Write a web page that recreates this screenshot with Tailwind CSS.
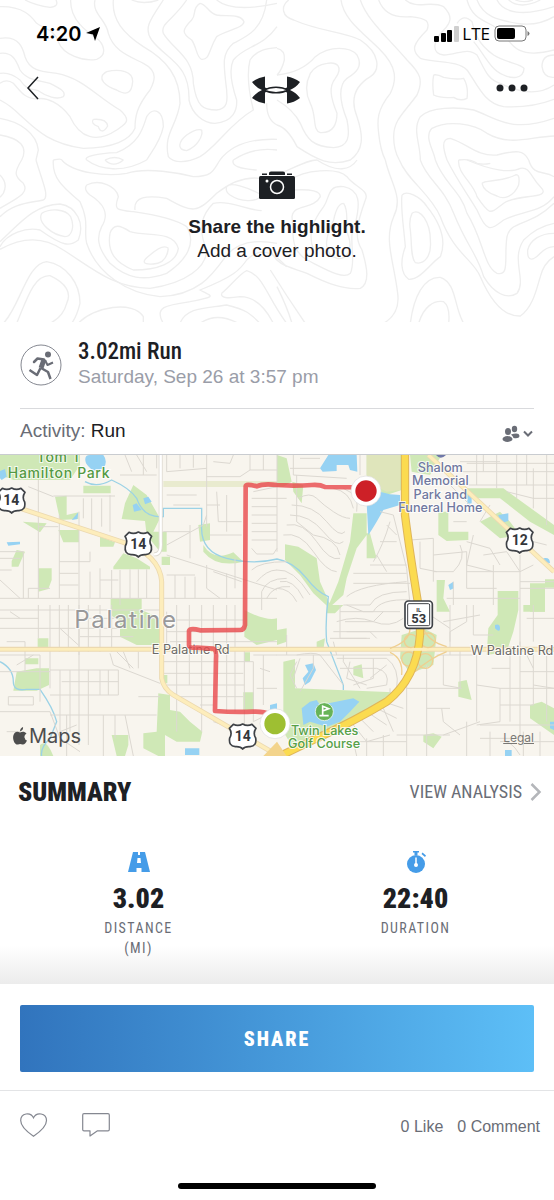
<!DOCTYPE html>
<html lang="en">
<head>
    <meta charset="UTF-8">
    <meta name="viewport" content="width=device-width, initial-scale=1.0">
    <title>3.02mi Run</title>
    <script src="https://cdn.jsdelivr.net/npm/@tailwindcss/browser@4"></script>
</head>
<body class="bg-white min-h-screen flex flex-col font-['Liberation_Sans',sans-serif] text-[#1d2024]">
    <!-- Cover -->
    <header class="relative h-[322px] overflow-hidden">
        <svg class="absolute inset-0 w-full h-full" viewBox="0 0 1662 966" preserveAspectRatio="xMidYMin slice" fill="none" stroke="#eeeeee" stroke-width="4" aria-hidden="true">
            <g>
                <path d="M75 0Q110 18 150 22Q178 20 168 0M0 20C70 18 95 50 110 70C130 85 165 90 175 125C190 165 250 185 290 178C325 165 310 130 290 115C260 95 210 60 212 0"/>
                <path d="M285 0C275 40 320 60 325 100C340 150 380 165 430 190C480 215 460 250 450 270C410 320 405 350 405 385C390 420 340 445 250 445C140 430 100 380 60 345C40 325 20 310 0 300"/>
                <path d="M340 0C335 60 370 100 430 140C500 180 540 230 540 310C530 380 490 400 505 470C520 490 560 490 600 470C650 440 690 370 760 330C740 250 745 200 750 180C770 150 800 145 831 143M395 0Q430 15 475 0"/>
                <path d="M490 0C450 60 430 85 455 120C500 180 570 190 567 300C575 340 610 370 645 370C700 365 712 330 710 300C690 240 690 200 700 180C730 140 790 140 831 80"/>
                <path d="M560 0C520 60 480 70 490 100C520 150 580 170 580 250C590 320 610 330 650 330C690 325 680 290 680 270C670 190 665 160 700 130C740 110 790 90 800 0"/>
                <path d="M600 10C575 25 590 45 575 60C545 90 545 100 575 120C590 140 590 175 605 178C630 180 625 150 650 110C680 90 730 85 732 65C720 40 680 50 650 45C625 40 620 12 600 10M650 0C680 25 740 30 831 10"/>
                <path d="M320 215C360 205 400 215 398 245C395 285 375 285 350 270C320 260 285 235 320 215"/>
                <path d="M0 115C60 105 70 150 75 170C90 215 130 215 170 220C250 235 290 290 360 330C400 365 370 375 350 390C290 430 240 415 210 350C180 310 140 290 110 297C70 295 60 270 40 250Q20 235 0 250"/>
                <path d="M0 160C40 155 50 185 60 210C80 240 110 240 150 250C180 265 200 275 190 290C170 300 140 290 115 272C90 265 80 270 60 240Q30 215 0 220"/>
                <path d="M280 358Q320 355 323 378C310 400 300 395 295 380Q270 370 280 358M605 390C610 410 590 440 560 452C530 450 535 425 560 405Q590 385 605 390"/>
                <path d="M0 355C60 365 110 400 115 450L108 480M0 405C60 415 85 440 65 480M260 480C250 470 290 460 350 458C420 430 430 380 440 350C460 320 490 330 490 380C480 430 450 460 440 480M315 480Q345 465 370 480"/>
                <path d="M660 480C690 440 740 415 831 418M700 480Q760 440 831 450M800 310Q800 360 831 375M160 480Q185 475 185 480"/>
            </g>
            <g transform="translate(831 0)">
                <path d="M35 0C10 20 15 50 50 60C130 95 200 95 250 120C310 160 310 210 280 230C230 260 220 300 240 350C260 410 260 450 220 480C160 500 120 480 60 440C40 400 20 380 0 375"/>
                <path d="M0 225C50 220 90 200 115 170C160 135 220 140 240 165C260 200 235 220 210 235C180 260 190 310 210 360C220 410 215 440 170 443C110 440 90 420 70 370Q50 330 0 300"/>
                <path d="M100 220C85 250 85 280 100 310C120 350 105 390 130 398C170 400 180 370 180 340C160 290 155 260 175 235C200 200 180 185 150 190Q115 195 100 220M0 145Q25 150 22 180Q15 210 0 225"/>
                <path d="M192 0C200 60 260 100 310 150C360 200 360 240 340 280C300 330 300 360 305 400Q310 450 325 480M250 0C270 60 330 110 390 180C430 220 440 240 420 285C380 340 350 360 350 410Q350 450 367 480"/>
                <path d="M305 0C320 40 350 55 400 50C450 55 460 65 450 90C410 130 400 150 430 175C480 190 540 180 570 210C600 250 620 310 680 320Q760 325 831 298"/>
                <path d="M385 0C420 30 460 0 500 20C530 50 520 70 500 90C470 120 460 160 500 165C540 165 570 140 600 165C620 200 630 240 670 250C720 275 780 290 831 255"/>
                <path d="M540 70Q560 40 585 65C590 90 600 130 650 165C690 190 730 190 741 205C740 240 700 235 680 225C640 210 620 160 590 125M600 0C620 50 660 60 720 70Q780 80 831 50M570 0C590 70 640 60 680 100C700 130 720 180 831 150M660 0C680 40 740 50 831 20M695 0Q730 30 790 0M715 0Q740 10 768 0"/>
                <path d="M470 225Q480 222 500 232Q540 240 560 235Q575 260 570 295Q550 305 530 292Q490 295 470 285Q465 250 470 225M831 165Q795 165 795 200Q800 235 831 232"/>
                <path d="M430 480C430 430 405 390 430 350C460 320 540 320 590 330C660 355 700 400 831 355M475 480C470 450 440 410 465 385C510 360 590 370 630 400C700 440 760 410 831 408M510 480C500 450 490 415 520 415C570 430 600 470 660 465C720 450 740 450 755 480M545 480Q580 475 600 490Q620 495 640 490"/>
            </g>
            <g transform="translate(0 480)">
                <path d="M108 0C125 60 150 110 130 120C80 130 40 130 0 170M65 0C40 40 45 50 70 70C90 100 50 115 0 145M0 45Q25 70 10 100L0 112"/>
                <path d="M160 0C155 60 200 90 240 125C270 190 250 210 260 250C290 340 380 400 480 410C600 405 640 340 680 285Q730 230 831 250"/>
                <path d="M260 75C300 55 350 80 355 110C340 150 350 150 400 155C470 165 530 180 560 200C590 250 560 300 500 340C430 365 380 355 330 310C290 260 290 230 305 200C330 160 310 130 270 105Q250 90 260 75"/>
                <path d="M330 220C340 190 360 195 390 215C440 230 520 210 535 265C530 310 470 330 400 330C350 310 320 280 330 220M505 265Q500 310 460 312C420 315 430 300 450 285Q490 250 505 265"/>
                <path d="M0 245C60 190 100 135 180 132C230 140 255 190 235 240C210 260 190 260 120 210C80 200 20 220 0 260M125 160C150 145 195 145 212 170C225 200 215 230 195 230C160 225 110 190 125 160"/>
                <path d="M0 268C70 230 130 230 190 270C270 320 340 385 450 385C560 370 620 320 620 270C590 200 610 160 640 130C690 120 740 150 785 152"/>
                <path d="M185 0C220 40 320 50 380 40C440 20 540 40 580 50C640 50 640 30 660 0M260 0C300 30 370 40 440 0M315 0Q340 25 370 0M700 0Q690 25 770 30"/>
                <path d="M405 150C400 110 440 105 500 115C580 160 590 160 650 100C700 60 740 50 780 55M680 80C690 65 740 80 785 105C770 130 720 125 690 105Q675 95 680 80"/>
                <path d="M10 490C60 440 80 310 140 305C200 315 240 370 240 430Q230 470 215 490M50 490C80 420 100 345 150 347C200 370 215 400 200 430Q190 470 150 490M235 490C280 440 400 420 430 470L430 490"/>
                <path d="M490 490C460 440 500 435 570 425C650 410 640 410 600 390C700 350 720 330 740 300C790 250 831 290 860 320M540 490C560 440 620 445 680 435C740 450 750 460 780 490M665 400C690 380 720 340 740 332C790 345 800 410 860 490M665 400Q660 420 720 410C770 410 800 450 820 490M600 490Q650 455 715 490"/>
            </g>
            <g transform="translate(831 480)">
                <path d="M40 60C80 30 180 20 210 50C230 80 280 90 265 120C240 190 230 230 255 270C270 320 280 370 250 385C200 390 150 370 90 340C40 320 0 320 -20 270"/>
                <path d="M50 90Q130 85 130 110C110 150 50 130 45 170C50 230 40 270 90 300C150 330 200 360 220 340C240 300 210 230 235 190C250 130 250 90 200 80C150 75 160 110 140 140C110 180 90 220 110 270"/>
                <path d="M200 130C220 160 200 200 215 230C230 280 200 300 180 295C130 280 150 220 170 180Q180 130 200 130"/>
                <path d="M0 45C60 20 90 0 120 0C180 40 220 30 240 0M325 0C340 70 380 110 350 170C320 240 350 300 362 400Q370 460 320 490"/>
                <path d="M375 105C390 90 430 110 450 140C490 190 510 240 490 290C460 310 430 360 395 358C370 340 370 300 385 260C380 200 370 140 375 105M405 160C430 140 460 190 460 240C465 290 440 315 415 308C400 290 405 250 400 210Q395 180 405 160"/>
                <path d="M367 0C390 60 460 100 490 170C530 280 590 300 610 350C640 420 680 470 730 468C770 440 780 380 790 350Q800 310 831 290"/>
                <path d="M430 0C450 60 500 80 530 160C570 260 600 280 620 350C650 400 690 420 720 400C750 360 700 300 740 240Q780 200 831 190"/>
                <path d="M475 0C500 70 550 90 570 160C620 240 620 320 660 340C700 350 680 290 690 230C700 180 760 200 831 130M510 0C540 60 570 100 600 150C630 220 640 210 680 180C740 150 790 160 831 110"/>
                <path d="M545 0C540 40 590 70 600 110C640 170 640 160 680 130C720 100 830 120 790 80C760 50 760 20 730 25C700 40 640 30 570 0M615 70C620 60 680 65 715 45Q730 40 725 75C710 110 680 120 660 108Q620 95 615 70"/>
                <path d="M755 0C770 50 800 30 831 50M831 220C790 220 760 240 752 270C750 310 770 300 790 280Q810 260 831 260"/>
                <path d="M400 490C410 410 440 350 490 352C540 370 530 440 560 490M425 490C440 440 470 420 500 425Q520 440 515 490M-20 330Q30 410 85 490M0 380Q30 440 45 490"/>
            </g>
        </svg>

        <div class="relative">
            <!-- Status bar -->
            <div class="h-16 pt-1 pl-9 pr-6 flex items-center justify-between text-black font-['Inter',sans-serif]">
                <div class="flex items-center gap-1">
                    <span class="text-xl font-semibold">4:20</span>
                    <svg class="w-4 h-4" viewBox="0 0 16 16" aria-hidden="true"><path d="M15 1L10 15L8 8.5L1 7z"/></svg>
                </div>
                <div class="flex items-center gap-[3px]">
                    <svg class="w-[25px] h-4" viewBox="0 0 25 16" aria-hidden="true">
                        <rect y="10" width="5" height="6" rx="1"/>
                        <rect x="7" y="7" width="5" height="9" rx="1"/>
                        <rect x="13" y="4" width="5" height="12" rx="1"/>
                        <rect x="20" width="5" height="16" rx="1" fill="#cfcfcf"/>
                    </svg>
                    <span class="text-[17px] leading-4 font-['Open_Sans',sans-serif]">LTE</span>
                    <svg class="w-9 h-[18px] ml-px" viewBox="0 0 36 18" aria-hidden="true">
                        <rect x="1" y="1" width="31" height="15" rx="4" fill="#fff" stroke="#777"/>
                        <rect x="3" y="3" width="18" height="11" rx="2"/>
                        <path d="M33.500 6v5q2-1 2-2.500t-2-2.500" fill="#777"/>
                    </svg>
                </div>
            </div>

            <!-- Navigation -->
            <nav class="pl-6 pr-[26px] h-12 flex items-center justify-between">
                <button type="button" aria-label="Back">
                    <svg class="w-4 h-6" viewBox="0 0 16 24" fill="none" stroke="#1d2024" stroke-width="1.5"><path d="M14 1L4 12L14 23"/></svg>
                </button>
                <svg class="w-12 h-7 mt-1 ml-4" viewBox="0 0 48 28" fill="#1d2024" role="img" aria-label="Under Armour">
                    <path d="M0 6Q6 1.500 13 .5V11.500L17 13V15L13 16.500V27.500Q6 26.500 0 22Q4 16.500 10 14Q4 11.500 0 6z"/>
                    <path d="M48 6Q42 1.500 35 .5V11.500L31 13V15L35 16.500V27.500Q42 26.500 48 22Q44 16.500 38 14Q44 11.500 48 6z"/>
                    <path d="M12 14Q17 11.200 24 11.200T36 14Q31 16.800 24 16.800T12 14z" fill="#fff" stroke="#1d2024" stroke-width="1.500"/>
                </svg>
                <button type="button" aria-label="More">
                    <svg class="w-8 h-2" viewBox="0 0 32 8" fill="#1d2024"><circle cx="4" cy="4" r="3.500"/><circle cx="16" cy="4" r="3.500"/><circle cx="28" cy="4" r="3.500"/></svg>
                </button>
            </nav>

            <button type="button" class="mt-[59px] w-full flex flex-col items-center text-[19px] leading-6">
                <svg class="w-9 h-7 mb-4" viewBox="0 0 36 28" fill="#1d2024" aria-hidden="true">
                    <rect y="5" width="36" height="23" rx="1.500"/>
                    <rect x="3" y="2.500" width="5" height="1.500"/>
                    <path d="M10 4V2Q10 .5 12 .5H24Q26 .5 26 2V4zM28 4V2.500H33V4z"/>
                    <circle cx="18" cy="16" r="6.500" fill="none" stroke="#fff" stroke-width="1.500"/>
                    <circle cx="8" cy="10" r="1.500" fill="#fff"/>
                </svg>
                <span class="font-bold">Share the highlight.</span>
                <span>Add a cover photo.</span>
            </button>
        </div>
    </header>

    <main class="flex-1">
        <!-- Workout title -->
        <section class="px-5">
            <div class="h-[86px] flex items-center gap-4">
                <svg class="w-[42px] h-[42px]" viewBox="0 0 42 42" fill="none" stroke="#6a6d76" aria-hidden="true">
                    <circle cx="21" cy="21" r="20" stroke="#858891"/>
                    <circle cx="28" cy="10.500" r="3" fill="#6a6d76" stroke="none"/>
                    <g stroke-width="2.500" stroke-linejoin="round">
                        <path d="M14 18L17.500 14.500L24 15.500" stroke-linecap="round"/>
                        <path d="M24 15.500L21 24" stroke-width="5"/>
                        <path d="M25 16L27.500 21L33 18.500" stroke-width="2"/>
                        <path d="M20.500 24L17 31L9.500 26"/>
                        <path d="M21 24L28 28L30.500 35"/>
                    </g>
                </svg>
                <div>
                    <h1 class="text-[23px] leading-6 font-medium font-['Roboto_Condensed','Roboto',sans-serif]">3.02mi Run</h1>
                    <p class="text-[19px] leading-[26px] text-[#9a9da8]">Saturday, Sep 26 at 3:57 pm</p>
                </div>
            </div>
            <div class="h-[46px] border-t border-[#d9dadd] flex items-center justify-between text-[19px]">
                <p><span class="text-[#6a6d76]">Activity:</span> Run</p>
                <button type="button" aria-label="Privacy: friends">
                    <svg class="w-8 h-[18px] mt-1" viewBox="0 0 32 18" fill="#6a6d76">
                        <ellipse cx="6" cy="6.500" rx="3" ry="3.500"/><ellipse cx="12.500" cy="4" rx="2.700" ry="3.300"/>
                        <ellipse cx="5.500" cy="14" rx="5" ry="3"/><path d="M9 9.500Q17 7 17.500 11Q17 14 11.500 13Q11 11 9 9.500z"/>
                        <path d="M22 6.500L26 10.500L30 6.500" fill="none" stroke="#6a6d76" stroke-width="2"/>
                    </svg>
                </button>
            </div>
        </section>

        <!-- Route map -->
        <section class="relative h-[302px] border-t border-[#c9ccd0] overflow-hidden font-['Inter',sans-serif]">
            <svg class="w-full h-full" viewBox="0 0 1662 903" preserveAspectRatio="xMidYMid slice" role="img" aria-label="Route map of Palatine">
                <rect width="1662" height="903" fill="#f8f5ee"/>
                <!-- parks -->
                <g fill="#cfe8b6">
                    <path d="M0 0H240V30L210 75H40L0 60zM250 92H332V115H250zM165 125L200 122V180L235 172V192L180 195zM68 200L140 205L120 232zM175 225H237V262H190zM300 245L345 262L340 275H300zM375 145L400 90L440 120L480 190L460 230H500V290H480L440 240L435 198L365 192zM340 335L370 295L410 310L450 335V343H340zM115 340H155V375L145 402L115 410zM332 430H425V465L480 490V570H410L360 545V500L332 480zM35 318L50 285L75 290L55 335H35zM595 210L630 205V255L600 260zM610 270Q640 320 700 292L730 320Q650 340 610 290zM485 305H510V330H485z"/>
                    <path d="M113 550H145V578H113zM50 650L110 640H147V690L110 707H40zM75 610H115V628H75zM733 465Q800 500 831 490V555L770 570L733 545zM733 592H750V620H733zM730 712H762V765H730zM475 715L510 720V765L540 770L570 800L607 830L600 860H530L495 840V903H475L430 880V835L470 830zM335 840H385V870L375 903H350zM120 870Q140 850 160 903H120zM490 660H502V685H490z"/>
                    <path d="M831 0L860 10L875 80L850 95H831zM877 80L910 90L905 145L880 110zM1100 0H1205V105L1160 120L1120 100L1100 60zM1060 175H1100V235H1110L1130 310H1100V240L1070 280L1040 370L1030 420L980 465L1015 380L1050 260zM855 268L895 275L950 310L960 380L1000 470L940 415L900 360L855 315zM1230 0H1325L1290 60L1235 50zM1315 170H1345V230H1405V255L1340 258L1315 240zM1400 100H1510L1662 210V240L1590 200L1500 130H1400zM1440 200L1500 170L1530 200L1560 240L1500 250zM1493 408H1555V465L1540 530L1520 590L1460 600L1465 520L1493 480zM1590 385H1635V470H1590zM1310 375H1335L1330 430L1350 470H1310zM1635 373H1662V398H1635z"/>
                    <path d="M831 525L860 520V560L831 570zM950 560L975 550L970 585H950zM980 450H1030L1005 475H980zM850 620L885 612V700L1180 712L1120 770L1000 830L880 880L850 830zM1060 635L1085 628L1090 670L1060 660zM1375 680L1400 675L1415 735L1375 725zM1270 840L1300 835L1325 845L1300 880L1270 860zM1590 750L1625 740L1662 760V840L1590 790zM1205 540L1270 520L1310 540L1300 630L1230 655L1200 610zM1570 450H1635V470H1570z"/>
                </g>
                <path d="M1100 0H1200V105L1160 110L1100 80z" fill="#dfe5bb"/>
                <path d="M490 78H831V96H490z" fill="#e9ebcf"/>
                <!-- water -->
                <g fill="#96d2f3">
                    <path d="M258 25Q250 0 270 0H310Q325 20 310 40Q280 60 258 25zM0 48L15 42L20 65L5 75L0 70zM398 150L410 145L425 165L402 170zM430 130L445 125L455 140L435 148zM215 195L235 172L232 192zM20 262L60 260V268L25 272z"/>
                    <path d="M985 0H1070L1072 50L1050 45L1045 30H1010V48L968 50L960 40zM1100 145L1130 140L1140 110L1170 118L1200 120V150L1150 165L1130 200L1115 225L1105 240zM1345 390L1360 380L1362 400L1350 405zM1495 180L1525 175V198L1500 205zM1630 310Q1650 305 1650 325L1630 320zM1402 120L1415 110V145L1402 147z"/>
                    <path d="M915 630L940 625L948 645L930 680L915 690L908 670L925 650zM905 760L930 740L950 735L960 750L1060 730L1078 740L1050 770L1020 800L980 815L930 800L910 810zM555 880H598V900H555zM1515 885H1535V903H1515zM1485 510Q1500 505 1500 520T1485 520zM1650 800H1662V825L1650 820zM810 750L831 745V770H810z"/>
                </g>
                <g fill="none" stroke="#9bd2e6" stroke-width="4">
                    <path d="M255 80Q290 100 335 75Q390 100 410 130Q430 190 490 185V160H605V210Q600 290 680 310T831 312Q880 320 920 370Q950 410 985 425Q975 500 980 560L1030 690V705"/>
                    <path d="M0 620Q40 640 40 680Q40 710 80 703H120Q160 760 170 800L150 850Q120 880 125 903"/>
                </g>
                <!-- streets -->
                <g fill="none" stroke="#dcd8d1" stroke-width="3">
                    <path d="M115 75V430M115 215H175M178 180V430M237 170V600M275 130V225M250 130V190M305 130V215M330 120V230M160 123H345M85 95L160 125M0 290H70V430M0 310H60M0 375L60 430M178 320H270V290M178 355H235M178 390H235M235 430H831M270 430V350M300 340V430M335 345V430M360 345V450M390 343V430M415 343V430M440 343V430M300 375H355M0 430H235M0 465H480M85 400H150M85 400V430M0 345H35"/>
                    <path d="M375 0L395 50M430 0V60M470 0V40M360 60H470M410 0L440 50M620 0V215M500 120H590M520 150H600M500 0V50L620 40M540 0V40M580 0V38M620 65H720L750 45H831M640 20L690 25L700 0M750 0V45M790 0V45M500 270L610 210L620 180M570 210V310M490 230H570M650 110L655 200H725M680 120V230M620 150H660M630 240H725M500 300L831 405M525 360V430M555 365V430M585 365V430M620 330V400L660 430M680 355V430M500 360H585M640 350L725 380M705 310V400"/>
                    <path d="M760 110L831 95M755 130H860M755 155H831M755 180H831M755 205H831M755 230H831M755 255H831M755 280L770 297H820L831 280M755 345Q780 320 860 320M770 380Q800 345 831 345M785 465V410Q800 370 860 370M800 430Q820 390 870 395M831 0V290"/>
                    <path d="M870 40H960M880 0V60L1040 70M900 10H960M890 60V200L940 240Q1010 250 1020 300M895 130Q930 110 950 130T1000 170T1050 190M875 150Q940 150 980 200T1035 230M870 180Q930 180 970 230T1030 260M860 210Q910 200 950 260T1020 310M850 240Q900 230 940 290T1010 350M1000 100Q1050 110 1060 160M1080 0V60M830 345Q880 340 930 420M840 380Q880 370 910 430M830 400Q870 400 890 440M1030 100Q1080 120 1070 170"/>
                    <path d="M1140 170L1180 180L1200 260L1220 340L1230 450M1120 320Q1150 270 1170 200M1160 210L1190 240M1140 260H1190M1110 330H1220M1130 300L1160 350M1060 355H1220M1060 385H1230M1030 450H1110Q1130 410 1220 410M1040 425Q1080 390 1220 380M1020 470H1120Q1140 430 1230 435M1010 500Q1070 480 1120 500T1210 490M1000 530H1110L1130 550M990 550H1100"/>
                    <path d="M1230 255L1300 250V380M1260 260V340L1310 350M1300 300L1400 290V400M1300 350H1360Q1400 310 1380 270M1400 260L1470 280L1500 330M1420 240L1400 330L1480 350M1450 300L1520 290L1560 350M1480 330V450M1400 350H1560M1360 380V450M1340 430H1560M1400 400H1490M1560 300V380H1662M1600 330L1560 350M1560 380V600M1560 400H1662M1600 260L1640 270"/>
                    <path d="M1330 50H1662M1400 25H1662M1400 90H1662M1430 0V90M1490 0V100M1550 0V130M1600 40V160M1640 0V210M1520 110L1600 130H1662M1380 20H1500M1350 90L1410 150M1470 150L1440 200M1360 200H1400M1450 0V50M1580 0V90"/>
                    <path d="M0 490H115M0 520H145M115 450V550M150 450V700M30 470L60 490M178 450V590M205 450V590M237 450V870M265 450V590M300 450V590M335 450V590M145 520H235M180 520L235 570M240 490H480M240 520H360M240 545H400M0 580H80M20 560H75V610M0 600H120V740M0 650H150M50 630L100 600M75 610V650M330 595L340 630L480 685M350 590L400 640M370 590L390 640M415 590V640M150 645H355V720H150M180 645V850M210 645V830M265 645V870M300 645V720M325 645V720M185 680H355M25 725H100V750H25zM150 780H470M0 770H150L180 850L240 890M310 780V903M345 780V850M375 780L400 903M415 725H480M180 830L230 810M20 830H60M200 780V903"/>
                    <path d="M510 560H831M500 470V580M530 450V830M568 450V690M605 450V830M640 450V580M680 450V770M705 450V770M733 580V840M500 495H730M500 530H730M490 620H760M490 655H730M500 690H733M520 725H730M760 620V800M790 600V750M760 600H831M770 700H831M600 750H640M780 640L810 650M760 800L800 780M640 800L700 820"/>
                    <path d="M1020 450V550H1110M1040 450L1090 470H1200M1035 500H1120L1150 470M1040 530H1200M1010 610H1160Q1200 640 1190 700M1020 640H1130Q1170 650 1160 690L1100 700M1010 600L1000 560M890 600Q940 590 960 600L1030 690M890 620L870 660L890 700M900 610L880 670M940 600V640L900 710M1030 600V620L1080 700M1120 610V670L1060 690M1160 630L1110 670M1050 620L1040 670L1100 690"/>
                    <path d="M1220 650V903M1280 630V903M1220 700H1380M1280 760H1350M1330 600V690L1385 700M1310 600H1420M1380 580V700M1350 600V530L1400 500V450M1290 480L1350 520M1440 480L1330 500M1420 450V540H1480M1430 600V800M1430 690L1500 700H1662M1500 700V800L1430 810M1530 590V800M1475 640H1530M1560 560V850M1600 600V750M1560 650H1662M1580 600L1600 640M1640 600V800M1500 750H1600M1440 810H1662M1350 840H1280M1325 760L1330 800L1380 840M1400 800V903M1190 840H1300M1330 840L1440 800M1350 560V450M1600 450V560M1580 490H1662M1662 700L1600 690M1470 830V903M1440 850H1530M1570 830V903M1500 860Q1530 850 1560 900M1620 830V903M1600 860H1662"/>
                    <path d="M1080 790L1120 830M1100 770L1160 810M1130 760L1190 790M1060 810L1100 860L1170 840M1150 740L1210 760M1100 850V903M1150 840V903M1020 860H1220M1170 730V700M1200 700L1150 760L1180 830M1060 860L1070 903M830 600H1180M860 540V600"/>
                </g>
                <g fill="none"><path d="M482 0V260Q485 300 462 298" stroke="#dedad2" stroke-width="12"/><path d="M482 0V260Q485 300 462 298" stroke="#fff" stroke-width="7"/></g>
                <!-- main roads -->
                <g fill="none" stroke="#ecd9b0" stroke-width="15">
                    <path d="M0 140L370 262Q480 300 485 380V670Q490 700 520 720L831 900"/><path d="M0 583H1662"/><path d="M1285 0L1662 350"/>
                </g>
                <g fill="none" stroke="#fdedbb" stroke-width="10">
                    <path d="M0 140L370 262Q480 300 485 380V670Q490 700 520 720L831 900"/><path d="M0 583H1662" stroke-width="8"/><path d="M1285 0L1662 350"/>
                </g>
                <g fill="none" stroke="#efcf90" stroke-width="4">
                    <circle cx="1233" cy="558" r="20"/><circle cx="1284" cy="556" r="22"/><circle cx="1226" cy="612" r="21"/><circle cx="1276" cy="618" r="22"/>
                    <path d="M1170 580Q1230 560 1230 520M1340 575Q1285 560 1270 520M1170 592Q1210 610 1205 660M1340 590Q1290 610 1245 650"/>
                </g>
                <path d="M1215 0V180Q1230 300 1260 480V540Q1250 670 1160 740Q1060 800 950 850L840 903" fill="none" stroke="#dfb55a" stroke-width="25"/>
                <path d="M1215 0V180Q1230 300 1260 480V540Q1250 670 1160 740Q1060 800 950 850L840 903" fill="none" stroke="#fbdb50" stroke-width="19"/>
                <path d="M1235 583H1280" stroke="#fdedbb" stroke-width="9"/>
                <path d="M790 903L831 860L860 903z" fill="#f3d48c"/>
                <!-- street names sit under the route -->
                <g font-family="Inter, sans-serif" font-size="38" text-anchor="middle" fill="#6b6966" stroke="#fff" stroke-width="6" stroke-opacity=".8" paint-order="stroke">
                    <text x="572" y="596">E Palatine Rd</text><text x="1536" y="600">W Palatine Rd</text>
                </g>
                <!-- route -->
                <path d="M1095 97L975 96Q960 88 935 90T880 92L831 90Q790 85 770 94Q735 85 737 95L735 510Q732 525 720 525L600 526Q570 518 567 528V570Q567 580 590 578L640 581Q650 585 648 610L645 768Q700 772 760 770T822 800" fill="none" stroke="#e9484b" stroke-opacity=".8" stroke-width="14" stroke-linejoin="round"/>
                <circle cx="1098" cy="108" r="45" fill="#fff" stroke="#ddd" stroke-width="2"/><circle cx="1098" cy="108" r="32" fill="#cd2027"/>
                <circle cx="825" cy="806" r="45" fill="#fff" stroke="#ddd" stroke-width="2"/><circle cx="825" cy="806" r="32" fill="#9ebf32"/>
                <!-- shields -->
                <g fill="#fff" stroke="#3f4247" stroke-width="5" stroke-linejoin="round">
                    <path id="us" d="M-28 -35Q-14 -28 0 -36Q14 -28 28 -35L40 -23Q30 -8 39 6Q43 30 22 32Q6 31 0 39Q-6 31 -22 32Q-43 30 -39 6Q-30 -8 -40 -23z" transform="translate(35 135)"/>
                    <use href="#us" x="380" y="132"/>
                    <use href="#us" x="1524" y="120"/>
                    <use href="#us" x="693" y="708"/>
                    <rect x="1215" y="438" width="82" height="82" rx="10"/>
                    <rect x="1223" y="446" width="66" height="66" rx="4" stroke-width="3"/>
                </g>
                <circle cx="973" cy="770" r="27" fill="#67b357" stroke="#fff" stroke-width="2"/>
                <path d="M968 782V754L986 761L968 768M958 782H986" fill="none" stroke="#fff" stroke-width="5"/>
                <path d="M1308 0Q1322 16 1338 0z" fill="#6f78a8"/>
                <!-- labels -->
                <g font-family="Inter, sans-serif" text-anchor="middle">
                    <g font-family="Roboto, sans-serif" font-size="42" font-weight="700" fill="#33363b">
                        <text x="34" y="150">14</text><text x="415" y="282">14</text><text x="1559" y="269">12</text><text x="728" y="857">14</text>
                        <text x="1256" y="504" font-size="39">53</text><text x="1256" y="470" font-size="18">IL</text>
                    </g>
                    <g stroke="#fff" stroke-width="6" stroke-opacity=".8" paint-order="stroke" font-weight="500">
                        <g fill="#549a43" font-size="42" letter-spacing="2"><text x="178" y="22">Tom T</text><text x="177" y="68">Hamilton Park</text></g>
                        <g fill="#55a047" font-size="38"><text x="974" y="840">Twin Lakes</text><text x="972" y="880">Golf Course</text></g>
                        <g fill="#70789f" font-size="38"><text x="1321" y="51">Shalom</text><text x="1321" y="91">Memorial</text><text x="1321" y="131">Park and</text><text x="1321" y="171">Funeral Home</text></g>
                        <text x="378" y="518" font-size="72" font-weight="400" fill="#99999a" letter-spacing="5">Palatine</text>
                    </g>
                </g>
            </svg>
            <div class="absolute left-3 bottom-2 flex items-center gap-px text-[#4d4d4d] text-xl">
                <svg class="w-4 h-[18px]" viewBox="0 0 16 18" fill="#4d4d4d" aria-hidden="true"><path d="M8 5.500C10 4.500 12.500 4 14.500 6.500Q12 8 12.500 10.500Q13 13 15 13.500Q13 18 10.500 17.500Q8 16.500 6 17.500C3 18.500 0 12 1.500 8C3 4 5.500 4.500 8 5.500zM8 4.500Q8 1 11 0Q11.500 3.500 8 4.500z"/></svg>
                <span class="leading-6">Maps</span>
            </div>
            <a href="#legal" class="absolute right-5 bottom-2 text-xs leading-5 text-[#7a7875] underline">Legal</a>
        </section>

        <!-- Summary -->
        <section class="font-['Roboto_Condensed','Roboto',sans-serif]">
            <div class="h-[72px] pl-[18px] pr-3 flex items-center justify-between">
                <h2 class="text-[26px] font-black">SUMMARY</h2>
                <a href="#analysis" class="flex items-center gap-2 text-lg text-[#6a6d76]">
                    VIEW ANALYSIS
                    <svg class="w-3 h-[18px]" viewBox="0 0 12 18" fill="none" stroke="#b4b6ba" stroke-width="2.500" aria-hidden="true"><path d="M1.500 1L9.500 9L1.500 17"/></svg>
                </a>
            </div>
            <dl class="h-[156px] pt-[23px] grid grid-cols-2 text-center bg-linear-to-b from-white from-75% to-[#ececec]">
                <div class="flex flex-col items-center">
                    <svg class="w-[22px] h-[22px]" viewBox="0 0 22 22" fill="#459ce8" aria-hidden="true"><path d="M5 1H10V4H12V1H17L22 21H13.500V17H8.500V21H0zM9.500 7L9 12H13L12.500 7z" fill-rule="evenodd"/></svg>
                    <dd class="mt-2 text-[28px] leading-9 font-black">3.02</dd>
                    <dt class="mt-px w-20 text-sm leading-5 tracking-widest text-[#6a6d76]">DISTANCE (MI)</dt>
                </div>
                <div class="flex flex-col items-center">
                    <svg class="w-[22px] h-[22px]" viewBox="0 0 22 22" fill="#459ce8" aria-hidden="true">
                        <circle cx="11" cy="13" r="9"/><path d="M8 0H14V1.500H12.500V4H9.500V1.500H8zM17.500 1.500L21 4.500L20 6L16.500 3z"/>
                        <path d="M11 6.500V13" stroke="#fff" stroke-width="1.500"/><circle cx="11" cy="14" r="2" fill="#fff"/>
                    </svg>
                    <dd class="mt-2 text-[28px] leading-9 font-black">22:40</dd>
                    <dt class="mt-px text-sm leading-5 tracking-widest text-[#6a6d76]">DURATION</dt>
                </div>
            </dl>
        </section>
    </main>

    <footer class="bg-white">
        <div class="p-5 pb-[18px] border-b border-[#e3e4e6]">
            <button type="button" class="w-full h-[67px] rounded-xs bg-linear-to-r from-[#3174bd] to-[#5dbff7] text-white text-xl font-black tracking-widest font-['Roboto_Condensed','Roboto',sans-serif]">SHARE</button>
        </div>
        <div class="h-[72px] pl-5 pr-[14px] flex items-center justify-between">
            <div class="flex gap-[34px] mb-1">
                <button type="button" aria-label="Like">
                    <svg class="w-7 h-6" viewBox="0 0 28 24" fill="none" stroke="#858891" stroke-width="1.200"><path d="M13.500 23.200C8 19.500 .7 14 .7 7.500C.7 0 10.500 -1.500 13.500 4.800C16.500 -1.500 26.500 0 26.500 7.500C26.500 14 19 19.500 13.500 23.200z"/></svg>
                </button>
                <button type="button" aria-label="Comment">
                    <svg class="w-7 h-6" viewBox="0 0 28 24" fill="none" stroke="#858891" stroke-width="1.200" stroke-linejoin="round"><path d="M2 .7H26Q27.300 .7 27.300 2V16.500Q27.300 17.800 26 17.800H15.500L8 23V17.800H2Q.7 17.800 .7 16.500V2Q.7 .7 2 .7z"/></svg>
                </button>
            </div>
            <p class="flex gap-[14px] text-base text-[#6a6d76]"><span>0 Like</span><span>0 Comment</span></p>
        </div>
        <div class="h-[37px] pt-5 flex justify-center"><div class="w-[198px] h-[6px] rounded-full bg-black"></div></div>
    </footer>
</body>
</html>
